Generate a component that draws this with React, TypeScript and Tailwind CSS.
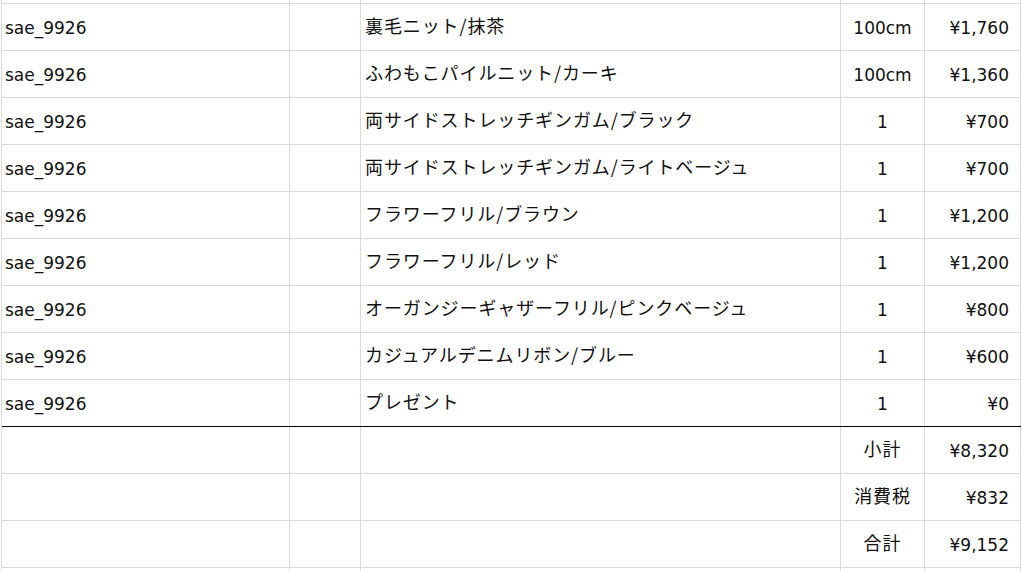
import React from 'react';

const ITEMS = [
  { name: '裏毛ニット/抹茶', qty: '100cm', price: '¥1,760' },
  { name: 'ふわもこパイルニット/カーキ', qty: '100cm', price: '¥1,360' },
  { name: '両サイドストレッチギンガム/ブラック', qty: '1', price: '¥700' },
  { name: '両サイドストレッチギンガム/ライトベージュ', qty: '1', price: '¥700' },
  { name: 'フラワーフリル/ブラウン', qty: '1', price: '¥1,200' },
  { name: 'フラワーフリル/レッド', qty: '1', price: '¥1,200' },
  { name: 'オーガンジーギャザーフリル/ピンクベージュ', qty: '1', price: '¥800' },
  { name: 'カジュアルデニムリボン/ブルー', qty: '1', price: '¥600' },
  { name: 'プレゼント', qty: '1', price: '¥0' },
];

const TOTALS = [
  { label: '小計', value: '¥8,320' },
  { label: '消費税', value: '¥832' },
  { label: '合計', value: '¥9,152' },
];

const latin = "font-['DejaVu_Sans','Noto_Sans_CJK_JP',sans-serif] text-[17px] leading-none pt-[2px]";
const jp = "font-['Noto_Sans_CJK_JP','DejaVu_Sans',sans-serif] text-[18px] tracking-[0.9px] leading-none pb-[5px]";

function Row({
  cells,
  last,
  height = 'h-[47px]',
  label,
}: {
  cells: React.ReactNode[];
  last?: boolean;
  height?: string;
  label?: boolean;
}) {
  const border = last ? 'border-b border-b-black' : 'border-b border-b-[#dadada]';
  return (
    <div className={`grid grid-cols-[288px_71px_480px_84px_96px] ${height} ${border}`}>
      <div className={`flex items-center pl-[3px] border-r border-[#dadada] ${latin}`}>{cells[0]}</div>
      <div className="border-r border-[#dadada]" />
      <div className={`flex items-center pl-[4px] border-r border-[#dadada] ${jp}`}>{cells[2]}</div>
      <div className={`flex items-center justify-center border-r border-[#dadada] ${label ? jp : latin}`}>
        {cells[3]}
      </div>
      <div className={`flex items-center justify-end pr-[11px] border-r border-[#dadada] ${latin}`}>{cells[4]}</div>
    </div>
  );
}

export default function App() {
  return (
    <div className="w-[1022px] h-[571px] overflow-hidden bg-white text-[#111]">
      <div className="ml-[1px] border-l border-[#dadada] w-[1020px]">
        <Row cells={['', '', '', '', '']} height="h-[4px]" />
        {ITEMS.map((it, i) => (
          <Row
            key={i}
            cells={['sae_9926', '', it.name, it.qty, it.price]}
            last={i === ITEMS.length - 1}
          />
        ))}
        {TOTALS.map((t) => (
          <Row key={t.label} label cells={['', '', '', t.label, t.value]} />
        ))}
        <Row cells={['', '', '', '', '']} />
      </div>
    </div>
  );
}
